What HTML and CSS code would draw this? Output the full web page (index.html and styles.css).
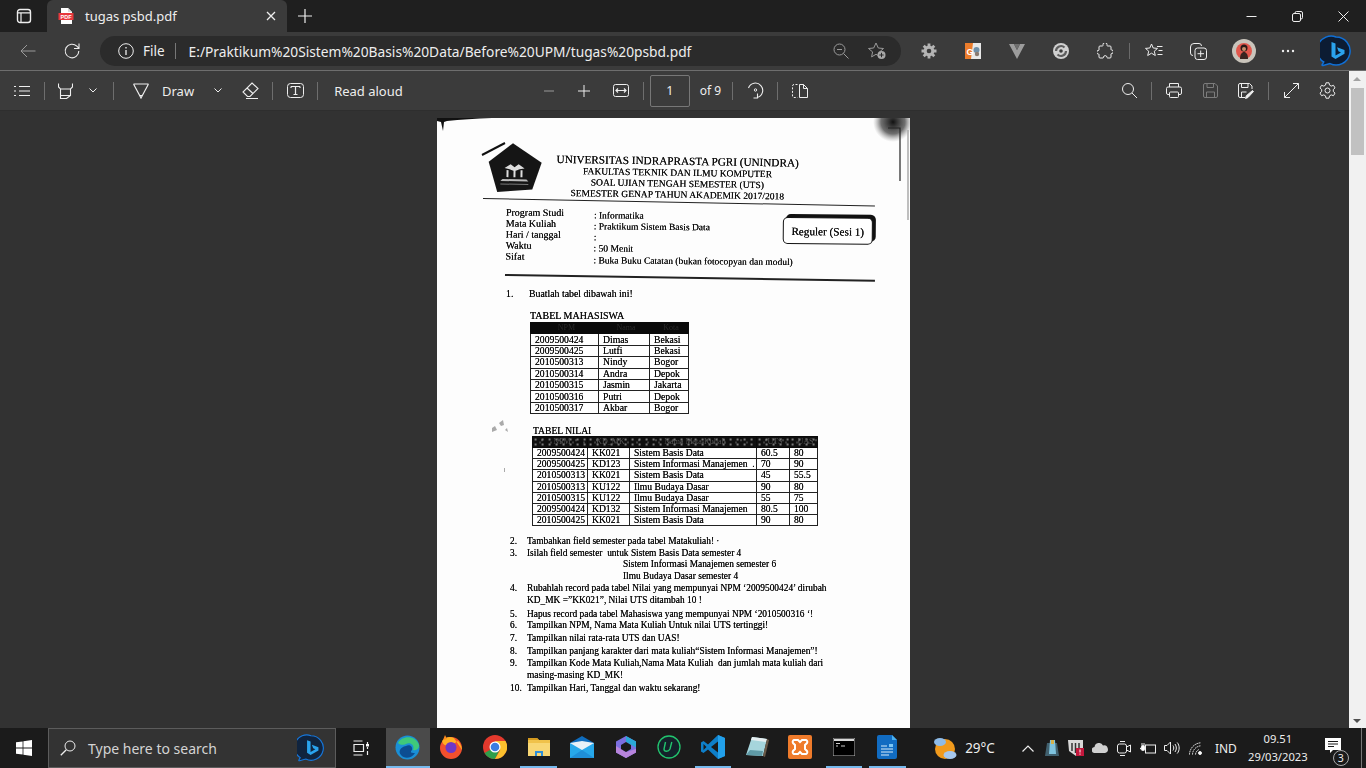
FILE: index.html
```html
<!DOCTYPE html>
<html lang="en">
<head>
    <meta charset="UTF-8">
    <title>tugas psbd.pdf</title>
    <link rel="stylesheet" href="styles.css">
</head>
<body>
    <!-- tab strip -->
    <header class="titlebar">
        <div class="tab-toggle">
            <svg class="ic" width="16" height="16" viewBox="0 0 16 16"><rect x="1.5" y="1.5" width="13" height="13" rx="2.5" stroke-width="1.4"/><path d="M1.5 4.8h13M5 4.8v9.7" stroke-width="1.2"/></svg>
        </div>
        <div class="tab">
            <svg class="tab-icon" width="16" height="16" viewBox="0 0 16 16"><path d="M3 0h7l4 4v12H3z" fill="#fff"/><path d="M10 0l4 4h-4z" fill="#d9d9d9"/><rect x="0.5" y="5" width="15" height="7" fill="#e8383d"/><text x="8" y="10.7" class="pdf-tag">PDF</text></svg>
            <span class="tab-title">tugas psbd.pdf</span>
            <svg class="ic tab-close" width="10" height="10" viewBox="0 0 10 10"><path d="M1 1l8 8M9 1l-8 8" stroke-width="1.3"/></svg>
        </div>
        <div class="new-tab">
            <svg class="ic" width="16" height="16" viewBox="0 0 16 16"><path d="M8 1v14M1 8h14" stroke-width="1.2"/></svg>
        </div>
        <div class="window-btns">
            <div class="win-btn"><svg class="ic" width="11" height="11" viewBox="0 0 11 11"><path d="M0.5 5.5h10"/></svg></div>
            <div class="win-btn"><svg class="ic" width="11" height="11" viewBox="0 0 11 11"><rect x="0.5" y="2.5" width="8" height="8" rx="1.5"/><path d="M3 2.5V2a1.5 1.5 0 0 1 1.5-1.5H9A1.5 1.5 0 0 1 10.5 2v4.5A1.5 1.5 0 0 1 9 8h-.5"/></svg></div>
            <div class="win-btn"><svg class="ic" width="11" height="11" viewBox="0 0 11 11"><path d="M0.5 0.5l10 10M10.5 0.5l-10 10"/></svg></div>
        </div>
    </header>

    <!-- address bar row -->
    <nav class="navbar">
        <div class="slot dim"><svg class="ic" width="16" height="14" viewBox="0 0 16 14"><path d="M15.5 7H1M7 1L1 7l6 6"/></svg></div>
        <div class="slot"><svg class="ic" width="18" height="18" viewBox="0 0 18 18"><path d="M15.8 9a6.8 6.8 0 1 1-2-4.8L16 6.4M16 1.5v5h-5" stroke-width="1.1"/></svg></div>
        <div class="address">
            <svg class="ic" width="16" height="16" viewBox="0 0 16 16"><circle cx="8" cy="8" r="7.3"/><path d="M8 7v5M8 4v1.4" stroke-width="1.3"/></svg>
            <span class="addr-file">File</span>
            <span class="addr-sep"></span>
            <span class="addr-url">E:/Praktikum%20Sistem%20Basis%20Data/Before%20UPM/tugas%20psbd.pdf</span>
            <span class="addr-end">
                <svg class="ic dim" width="16" height="16" viewBox="0 0 16 16"><circle cx="6.5" cy="6.5" r="5.5"/><path d="M4 6.5h5M10.5 10.5l5 5"/></svg>
                <svg class="addr-fav" width="20" height="18" viewBox="0 0 20 18"><path class="ic dim" d="M9 1l2.3 5 5.2.5-3.900 3.400 1 5-4.600-2.600-4.400 2.600 1-5L1.500 6.500 6.700 6z"/><circle cx="14.500" cy="13" r="4" fill="#a8a8a8"/><path d="M14.500 10.800v4.400M12.300 13h4.400" stroke="#2b2b2b"/></svg>
            </span>
        </div>
        <div class="slot first-ext"><svg width="16" height="16" viewBox="0 0 16 16"><path d="M8 .5v15M.5 8h15M2.700 2.700l10.600 10.600M13.300 2.700L2.700 13.300" stroke="#b4b4b4" stroke-width="2.800"/><circle cx="8" cy="8" r="5.400" fill="#b4b4b4"/><circle cx="8" cy="8" r="2.300" fill="#3b3b3b"/></svg></div>
        <div class="slot"><svg width="16" height="16" viewBox="0 0 16 16"><rect width="16" height="16" fill="#e8e8e8"/><path d="M0 0h8l-2 16H0z" fill="#ec7d2c"/><text x="1.500" y="12" class="ext-g">G</text><circle cx="11.500" cy="7" r="3" fill="#6f8fa8"/><circle cx="12" cy="11" r="2.200" fill="#8a7a70"/></svg></div>
        <div class="slot"><svg width="16" height="15" viewBox="0 0 16 15"><path d="M0 0h5l3 6 3-6h5L8 15z" fill="#9c9c9c"/><path d="M5 0l3 6 3-6z" fill="#6e6e6e"/></svg></div>
        <div class="slot"><svg width="16" height="16" viewBox="0 0 16 16"><circle cx="8" cy="8" r="8" fill="#d0d0d0"/><path d="M3 8a5 5 0 0 1 8.500-3.500M13 8a5 5 0 0 1-8.500 3.500" fill="none" stroke="#5e5e5e" stroke-width="2.200"/><circle cx="8" cy="8" r="1.800" fill="#3b3b3b"/></svg></div>
        <div class="slot"><svg class="ic" width="16" height="16" viewBox="0 0 16 16"><path d="M6 1.500a2 2 0 0 1 4 0c0 1 0 1.500 .5 1.500H13a1 1 0 0 1 1 1v2.500c0 .5.500.5 1 .5a1.800 1.800 0 0 1 0 3.500c-.5 0-1 0-1 .5V14a1 1 0 0 1-1 1h-2.500c-.5 0-.5-.5-.5-1a1.800 1.800 0 0 0-3.500 0c0 .5 0 1-.5 1H3a1 1 0 0 1-1-1v-2.500C2 11 1.500 11 1 11a1.800 1.800 0 0 1 0-3.500c.5 0 1 0 1-.5V4a1 1 0 0 1 1-1h2.500c.5 0 .5-.5.500-1.500z"/></svg></div>
        <span class="sep-nav"></span>
        <div class="slot"><svg class="ic" width="18" height="16" viewBox="0 0 18 16"><path d="M6.500 1l1.700 4 4.300.4-3.200 2.800 1 4.300-3.800-2.300-3.800 2.300 1-4.300L.5 5.400 4.800 5zM12 3.500h5.500M13.500 7.500h4M12.500 11.500h5"/></svg></div>
        <div class="slot"><svg class="ic" width="17" height="17" viewBox="0 0 17 17"><path d="M3 12.500A2.500 2.500 0 0 1 .5 10V4A3.500 3.500 0 0 1 4 .5h5A2.500 2.500 0 0 1 11.500 3"/><rect x="5" y="5" width="11.500" height="11.500" rx="2.500"/><path d="M10.700 7.500v6.500M7.500 10.700H14"/></svg></div>
        <div class="slot avatar-slot">
            <svg width="24" height="24" viewBox="0 0 24 24"><circle cx="12" cy="12" r="12" fill="#c9c4bb"/><circle cx="12" cy="12" r="8" fill="#e2574c"/><circle cx="12" cy="9" r="3.500" fill="#2a1a18"/><path d="M8 20c0-5 2-7 4-7s4 2 4 7z" fill="#3a2420"/><circle cx="12" cy="10" r="2" fill="#c98e6b"/></svg>
        </div>
        <div class="slot"><svg width="14" height="4" viewBox="0 0 14 4" fill="#eee"><circle cx="2" cy="2" r="1.200"/><circle cx="7" cy="2" r="1.200"/><circle cx="12" cy="2" r="1.200"/></svg></div>
        <div class="slot bing-slot">
            <svg width="32" height="32" viewBox="0 0 32 32"><path d="M16 2a14 14 0 1 1 -6 26.600L3 30.500c-1 .3-1.200-.6-.6-1.200l1.300-2.300A14 14 0 0 1 16 2z" fill="#0c1c33" stroke="#0f6fd6" stroke-width="1.500"/><path d="M11.500 7l4 1.500v12l5.500-3-2.500-1.200-1.500-4 7.500 2.700v3.800L15.500 24l-4-2.500z" fill="#2aa3ee"/></svg>
        </div>
    </nav>

    <div class="main">
        <div class="doc">
            <!-- pdf toolbar -->
            <div class="pdfbar">
                <div class="pslot w44"><svg class="ic" width="16" height="12" viewBox="0 0 16 12"><path d="M5 1.500h11M5 6h11M5 10.500h11M0 1.500h2M0 6h2M0 10.500h2" stroke-width="1.200"/></svg></div>
                <span class="divider"></span>
                <div class="pslot w40"><svg class="ic" width="15" height="16" viewBox="0 0 15 16"><path d="M.5 .5v3.500l2 2h10l2-2V.5M2.500 6v9.500l6 0 4-3V6M2.500 12.500h10" stroke-width="1.100"/></svg></div>
                <div class="pslot w16"><svg class="ic" width="8" height="5" viewBox="0 0 8 5"><path d="M.5.5L4 4 7.500.5"/></svg></div>
                <span class="divider ml-12"></span>
                <div class="pslot w36 ml-9"><svg class="ic" width="16" height="16" viewBox="0 0 16 16"><path d="M.5 1h15M.5 1L8 15l7.500-14M7 12.500h2" stroke-width="1.200"/></svg></div>
                <span class="bar-text ml-3">Draw</span>
                <div class="pslot w16 ml-16"><svg class="ic" width="8" height="5" viewBox="0 0 8 5"><path d="M.5.5L4 4 7.500.5"/></svg></div>
                <div class="pslot w36 ml-6"><svg class="ic" width="17" height="17" viewBox="0 0 17 17"><path d="M10 1l6 5.500-8 8H5.500L1 10zM5 6l6 5.500M4 16.500h12" stroke-width="1.100"/></svg></div>
                <span class="divider ml-4"></span>
                <div class="pslot w36 ml-4"><svg class="ic" width="17" height="15" viewBox="0 0 17 15"><rect x=".5" y=".5" width="16" height="14" rx="3"/><path d="M4 3.500h9M4 3.500v1.500M13 3.500v1.500M8.500 3.500v8M6.500 11.500h4" stroke-width="1.200"/></svg></div>
                <span class="divider ml-4"></span>
                <span class="bar-text ml-16">Read aloud</span>
                <div class="pslot w35 ml-129 dim"><svg class="ic" width="10" height="2" viewBox="0 0 10 2"><path d="M0 1h10"/></svg></div>
                <div class="pslot w35"><svg class="ic" width="12" height="12" viewBox="0 0 12 12"><path d="M6 0v12M0 6h12"/></svg></div>
                <div class="pslot w36 ml-1"><svg class="ic" width="16" height="13" viewBox="0 0 16 13"><rect x=".5" y=".5" width="15" height="12" rx="2"/><path d="M3 6.500h10M5 4.500l-2 2 2 2M11 4.500l2 2-2 2" stroke-width="1.200"/></svg></div>
                <span class="divider ml-4"></span>
                <div class="page-box">1</div>
                <span class="bar-text small ml-10">of 9</span>
                <span class="divider ml-11"></span>
                <div class="pslot w36 ml-4"><svg class="ic" width="17" height="17" viewBox="0 0 17 17"><path d="M1.500 6A7.300 7.300 0 1 1 10 15.500M10.500 11.500v4.500H6.500" stroke-width="1.100"/><circle cx="8.500" cy="8" r="1.200"/></svg></div>
                <span class="divider ml-4"></span>
                <div class="pslot w36 ml-4"><svg class="ic" width="16" height="14" viewBox="0 0 16 14"><path d="M5.500.5H2A1.500 1.500 0 0 0 .5 2v10A1.500 1.500 0 0 0 2 13.500h3.500" stroke-dasharray="2 1.500"/><path d="M7.500.5h4l4 4v9h-8zM11.500.5v4h4"/></svg></div>
                <div class="bar-spacer"></div>
                <div class="pslot w36"><svg class="ic" width="15" height="15" viewBox="0 0 15 15"><circle cx="6" cy="6" r="5.500"/><path d="M10 10l5 5"/></svg></div>
                <span class="divider ml-4"></span>
                <div class="pslot w36 ml-4"><svg class="ic" width="16" height="15" viewBox="0 0 16 15"><path d="M3.500 4V.5h9V4M3.500 11.500H2A1.500 1.500 0 0 1 .5 10V5.500A1.500 1.500 0 0 1 2 4h12a1.500 1.500 0 0 1 1.500 1.500V10a1.500 1.500 0 0 1-1.500 1.500h-1.500"/><rect x="3.500" y="9" width="9" height="5.500" rx="1"/></svg></div>
                <div class="pslot w36 faint"><svg class="ic" width="15" height="15" viewBox="0 0 15 15"><path d="M2 .5h10l2.500 2.500v10a1.500 1.500 0 0 1-1.500 1.500H2A1.500 1.500 0 0 1 .5 13V2A1.500 1.500 0 0 1 2 .5zM4 .5v4h6.500v-4M3.500 14.500V9h8v5.500"/></svg></div>
                <div class="pslot w36"><svg class="ic" width="16" height="16" viewBox="0 0 16 16"><path d="M7 14.500H2A1.500 1.500 0 0 1 .5 13V2A1.500 1.500 0 0 1 2 .5h9.500L14 3v3M3.500.5v4h6.500v-4M3.500 14.500V9h5"/><path d="M14.500 7.500l1 1-5.500 6-2.500 1 .8-2.700z" fill="#eee"/></svg></div>
                <span class="divider ml-4"></span>
                <div class="pslot w36 ml-4"><svg class="ic" width="15" height="15" viewBox="0 0 15 15"><path d="M.5 14.500l14-14M9 .5h5.500V6M6 14.500H.5V9"/></svg></div>
                <div class="pslot w36"><svg class="ic" width="17" height="17" viewBox="0 0 17 17"><path d="M7 .8h3l.5 2.300 1.700 1 2.300-.8 1.500 2.600-1.700 1.600v2l1.700 1.600-1.500 2.600-2.300-.8-1.700 1-.5 2.300H7l-.5-2.300-1.700-1-2.300.8L1 11.100l1.700-1.600v-2L1 5.900l1.500-2.600 2.300.8 1.700-1z"/><circle cx="8.500" cy="8.500" r="2.500"/></svg></div>
            </div>

            <!-- scanned page -->
            <main class="viewer">
                <div class="paper">
                    <svg class="scan-marks" width="473" height="610" viewBox="0 0 473 610">
                        <defs><radialGradient id="smudge"><stop offset="0" stop-color="#111"/><stop offset=".6" stop-color="#333" stop-opacity=".7"/><stop offset="1" stop-color="#888" stop-opacity="0"/></radialGradient></defs>
                        <path d="M0 0h55q-25 1-45 3L7 4 6 13 4 4 0 3z" fill="#111"/>
                        <ellipse cx="456" cy="4" rx="20" ry="20" fill="url(#smudge)"/>
                        <path d="M451 10h12v53" fill="none" stroke="#222" stroke-width="1.200"/>
                        <path d="M471 12v90" stroke="#aaa" stroke-width="1.500"/>
                        <path d="M45 37l23-12" stroke="#111" stroke-width="2"/>
                        <path d="M55 310l3-2 2 4-5 2zM62 305l4-3 1 5-3 1zM68 312l2-2 1 4zM67 350l1 0 0 4-1 0z" fill="#aaa"/>
                    </svg>

                    <div class="sheet">
                        <section class="letterhead">
                            <svg class="logo" width="56" height="56" viewBox="0 0 56 56"><path d="M25 1l29 19-9 27-35 3-9-30z" fill="#151515"/><path d="M17 26l6-4 4 3 4-3 6 4-5 1-5 2-5-2zM19 28h2v7h-2zM26 28h2v7h-2zM33 28h2v7h-2z" fill="#ddd"/><path d="M15 37h24l2 2H13z" fill="#bbb"/><path d="M13 42h28" stroke="#777"/></svg>
                            <div class="uni-lines">
                                <div class="uni-name">UNIVERSITAS INDRAPRASTA PGRI (UNINDRA)</div>
                                <div class="uni-sub">FAKULTAS TEKNIK DAN ILMU KOMPUTER</div>
                                <div class="uni-sub">SOAL UJIAN TENGAH SEMESTER (UTS)</div>
                                <div class="uni-sub">SEMESTER GENAP TAHUN AKADEMIK 2017/2018</div>
                            </div>
                        </section>
                        <hr class="rule rule-top">

                        <section class="exam-info">
                            <div class="info-labels">
                                <div>Program Studi</div>
                                <div>Mata Kuliah</div>
                                <div>Hari / tanggal</div>
                                <div>Waktu</div>
                                <div>Sifat</div>
                            </div>
                            <div class="info-values">
                                <div>: Informatika</div>
                                <div>: Praktikum Sistem Basis Data</div>
                                <div>:</div>
                                <div>: 50 Menit</div>
                                <div>: Buka Buku Catatan (bukan fotocopyan dan modul)</div>
                            </div>
                            <div class="session-badge">Reguler (Sesi 1)</div>
                        </section>
                        <hr class="rule rule-mid">

                        <div class="q-row first-q"><span class="q-num">1.</span><span class="q-one">Buatlah tabel dibawah ini!</span></div>

                        <div class="table-title tt-mhs">TABEL MAHASISWA</div>
                        <table class="scan-table tbl-mhs">
                            <colgroup><col class="c-68"><col class="c-51"><col class="c-39"></colgroup>
                            <tr class="head"><th>NPM</th><th>Nama</th><th>Kota</th></tr>
                            <tr><td>2009500424</td><td>Dimas</td><td>Bekasi</td></tr>
                            <tr><td>2009500425</td><td>Lutfi</td><td>Bekasi</td></tr>
                            <tr><td>2010500313</td><td>Nindy</td><td>Bogor</td></tr>
                            <tr><td>2010500314</td><td>Andra</td><td>Depok</td></tr>
                            <tr><td>2010500315</td><td>Jasmin</td><td>Jakarta</td></tr>
                            <tr><td>2010500316</td><td>Putri</td><td>Depok</td></tr>
                            <tr><td>2010500317</td><td>Akbar</td><td>Bogor</td></tr>
                        </table>

                        <div class="table-title tt-nilai">TABEL NILAI</div>
                        <table class="scan-table tbl-nilai">
                            <colgroup><col class="c-55"><col class="c-42"><col class="c-127"><col class="c-33"><col class="c-28"></colgroup>
                            <tr class="head noisy"><th>NPM</th><th>KD_MK</th><th>Nama Mata Kuliah</th><th>UTS</th><th>UAS</th></tr>
                            <tr><td>2009500424</td><td>KK021</td><td>Sistem Basis Data</td><td>60.5</td><td>80</td></tr>
                            <tr><td>2009500425</td><td>KD123</td><td>Sistem Informasi Manajemen&nbsp; .</td><td>70</td><td>90</td></tr>
                            <tr><td>2010500313</td><td>KK021</td><td>Sistem Basis Data</td><td>45</td><td>55.5</td></tr>
                            <tr><td>2010500313</td><td>KU122</td><td>Ilmu Budaya Dasar</td><td>90</td><td>80</td></tr>
                            <tr><td>2010500315</td><td>KU122</td><td>Ilmu Budaya Dasar</td><td>55</td><td>75</td></tr>
                            <tr><td>2009500424</td><td>KD132</td><td>Sistem Informasi Manajemen</td><td>80.5</td><td>100</td></tr>
                            <tr><td>2010500425</td><td>KK021</td><td>Sistem Basis Data</td><td>90</td><td>80</td></tr>
                        </table>

                        <ol class="questions">
                            <li><span class="q-num">2.</span>Tambahkan field semester pada tabel Matakuliah! ·</li>
                            <li><span class="q-num">3.</span>Isilah field semester&nbsp; untuk Sistem Basis Data semester 4</li>
                            <li class="q-sub">Sistem Informasi Manajemen semester 6</li>
                            <li class="q-sub">Ilmu Budaya Dasar semester 4</li>
                            <li><span class="q-num">4.</span>Rubahlah record pada tabel Nilai yang mempunyai NPM ‘2009500424’ dirubah</li>
                            <li class="q-cont">KD_MK =”KK021”, Nilai UTS ditambah 10 !</li>
                            <li><span class="q-num">5.</span>Hapus record pada tabel Mahasiswa yang mempunyai NPM ‘2010500316 ‘!</li>
                            <li><span class="q-num">6.</span>Tampilkan NPM, Nama Mata Kuliah Untuk nilai UTS tertinggi!</li>
                            <li><span class="q-num">7.</span>Tampilkan nilai rata-rata UTS dan UAS!</li>
                            <li><span class="q-num">8.</span>Tampilkan panjang karakter dari mata kuliah“Sistem Informasi Manajemen”!</li>
                            <li><span class="q-num">9.</span>Tampilkan Kode Mata Kuliah,Nama Mata Kuliah&nbsp; dan jumlah mata kuliah dari</li>
                            <li class="q-cont">masing-masing KD_MK!</li>
                            <li><span class="q-num">10.</span>Tampilkan Hari, Tanggal dan waktu sekarang!</li>
                        </ol>
                    </div>
                </div>
            </main>
        </div>

        <aside class="scroll-track">
            <div class="arrow-up"></div>
            <div class="scroll-thumb"></div>
            <div class="arrow-down"></div>
        </aside>
    </div>

    <!-- windows taskbar -->
    <footer class="taskbar">
        <div class="start"><svg width="16" height="16" viewBox="0 0 16 16" fill="#fff"><path d="M0 2.300l6.600-.9v6.200H0zM7.400 1.300L16 0v7.600H7.400zM0 8.400h6.600v6.200L0 13.700zM7.400 8.400H16V16l-8.600-1.200z"/></svg></div>
        <div class="searchbox">
            <svg class="ic search-ic" width="16" height="16" viewBox="0 0 16 16"><circle cx="10" cy="6" r="5"/><path d="M6.300 9.700L.8 15.200" stroke-width="1.300"/></svg>
            <span class="search-text">Type here to search</span>
            <svg class="search-bing" width="28" height="28" viewBox="0 0 32 32"><path d="M16 2a14 14 0 1 1-6 26.600L3 30.500c-1 .3-1.200-.6-.6-1.200l1.300-2.300A14 14 0 0 1 16 2z" fill="#10243f" stroke="#1577dd" stroke-width="1.300"/><path d="M11.500 7l4 1.500v12l5.500-3-2.500-1.200-1.500-4 7.500 2.700v3.800L15.500 24l-4-2.500z" fill="#2aa3ee"/></svg>
        </div>
        <div class="taskview"><svg class="ic" width="16" height="16" viewBox="0 0 16 16"><path d="M.5 1h9M.5 15h9M11 4h0M1 4.500h9.500v7H1zM14.500 2v3M14.500 7v2M14.500 11v4" stroke-width="1.200"/><rect x="13" y="4" width="3" height="2.500" fill="#fff" stroke="none"/></svg></div>

        <div class="task-apps">
            <div class="app active edge"><svg width="25" height="25" viewBox="0 0 25 25"><circle cx="12.500" cy="12.500" r="12" fill="#1a8fd6"/><path d="M3 8C6 1 20 -1 24 10c.6 4-3 6-6 5 2-5-3-8-7-6-3 1.500-6 1-8-1z" fill="#3fc97a"/><path d="M11 11c3-2 7 0 6 4-3 3 1 3 3 3-4 6-11 6-14 2-3-3-1-8 5-9z" fill="#0c4d92"/></svg></div>
            <div class="app"><svg width="24" height="24" viewBox="0 0 24 24"><circle cx="12" cy="13" r="11" fill="#f2502d"/><path d="M3 6c2 8 10 4 16 0 3 3 4 7 4 9L15 3c-4-2-9-1-12 3z" fill="#ffb021"/><circle cx="12" cy="12.500" r="5.500" fill="#6d38c7"/><path d="M4 5l2-5 2 4z" fill="#ff8a1e"/></svg></div>
            <div class="app"><svg width="24" height="24" viewBox="0 0 24 24"><circle cx="12" cy="12" r="12" fill="#e4392d"/><path d="M12 12L1.600 18A12 12 0 0 0 12 24l6-12z" fill="#2f9e4a"/><path d="M12 6h10.500A12 12 0 0 1 12 24l5.200-9z" fill="#fbc02d"/><circle cx="12" cy="12" r="5.500" fill="#fff"/><circle cx="12" cy="12" r="4.300" fill="#3b7de0"/></svg></div>
            <div class="app active"><svg width="22" height="20" viewBox="0 0 22 20"><path d="M0 1h9l2 2h11v15H0z" fill="#f0c24a"/><path d="M0 1h9l2 2H0z" fill="#d49a1f"/><path d="M0 6h22v13H0z" fill="#f8d774"/><path d="M7 14h8v5h-2v-3H9v3H7z" fill="#2f8fd8"/></svg></div>
            <div class="app"><svg width="24" height="22" viewBox="0 0 24 22"><path d="M12 0l12 7v15H0V7z" fill="#0f6cbd"/><path d="M0 7h24v15H0z" fill="#27a8ea"/><path d="M0 7l12 7 12-7-12-2z" fill="#e8f1f8"/><path d="M0 22l12-8 12 8z" fill="#1f8fd8"/></svg></div>
            <div class="app"><svg width="20" height="22" viewBox="0 0 20 22"><path d="M10 0l10 5.500v11L10 22 0 16.500v-11z" fill="#7b6fe0"/><path d="M10 0l10 5.500v6L10 6z" fill="#2aa8d8"/><path d="M0 10l10 6 10-3v3.500L10 22 0 16.500z" fill="#b784dc"/><path d="M10 6l5 3v4l-5 3-5-3V9z" fill="#1a1a1a"/></svg></div>
            <div class="app"><svg width="24" height="24" viewBox="0 0 24 24"><circle cx="12" cy="12" r="11" fill="#14222a" stroke="#22c56e" stroke-width="1.300"/><path d="M8.500 7l-1.500 7c0 3 4.500 3 6 0l1.800-7" fill="none" stroke="#22c56e" stroke-width="1.400"/></svg></div>
            <div class="app active"><svg width="24" height="24" viewBox="0 0 24 24"><path d="M17 0l7 3v18l-7 3L7 14.500 2.500 18 0 16.500V7.500L2.500 6 7 9.500z" fill="#0e7fc9"/><path d="M17 0l7 3v18l-7 3z" fill="#22a0ea"/><path d="M17 6.500L10 12l7 5.500z" fill="#1a1a1a"/><path d="M2.500 9v6l3-3z" fill="#1a1a1a"/></svg></div>
            <div class="app"><svg width="24" height="22" viewBox="0 0 24 22"><path d="M7 1l15 2-4 17L1 19z" fill="#a6d5dc"/><path d="M7 1l15 2-1 3L6 4z" fill="#e5eef0"/><path d="M22 3l2 1-4 17-2-1z" fill="#6b5a48"/><path d="M5 14l13 1-1 5-16-1z" fill="#5f9aa6"/></svg></div>
            <div class="app"><svg width="24" height="24" viewBox="0 0 24 24"><rect width="24" height="24" rx="2" fill="#ef7b2b"/><path d="M6 5h4l2 2 2-2h4a2 2 0 0 1 1 3l-2 2v4l2 2a2 2 0 0 1-1 3h-4l-2-2-2 2H6a2 2 0 0 1-1-3l2-2v-4L5 8a2 2 0 0 1 1-3z" fill="none" stroke="#fff" stroke-width="2"/></svg></div>
            <div class="app active"><svg width="22" height="18" viewBox="0 0 22 18"><rect width="22" height="18" fill="#000" stroke="#bbb"/><rect x="1" y="1" width="20" height="2" fill="#d8d8d8"/><path d="M3 5.500h4M3 8h2M8 8h4" stroke="#ccc"/></svg></div>
            <div class="app active"><svg width="20" height="24" viewBox="0 0 20 24"><path d="M2 0h13l5 5v17a2 2 0 0 1-2 2H2a2 2 0 0 1-2-2V2a2 2 0 0 1 2-2z" fill="#116cc2"/><path d="M15 0l5 5h-5z" fill="#4ab0ee"/><path d="M4 11h6M4 14h12M4 17h12M4 20h8" stroke="#d8ecfa"/><path d="M12 9h4v3h-4z" fill="#7cc6f4"/></svg></div>
        </div>

        <div class="tray">
            <svg class="weather" width="24" height="24" viewBox="0 0 24 24"><circle cx="12" cy="13" r="10" fill="#f19a1c"/><ellipse cx="7" cy="6" rx="6" ry="4" fill="#8ebbe8"/><ellipse cx="17" cy="19" rx="6.500" ry="4" fill="#a6c8ee"/></svg>
            <span class="temp">29°C</span>
            <div class="tray-icons">
                <div class="tray-ic"><svg class="ic" width="12" height="7" viewBox="0 0 12 7"><path d="M.5 6.500L6 1l5.500 5.500" stroke-width="1.200"/></svg></div>
                <div class="tray-ic"><svg width="14" height="18" viewBox="0 0 14 18"><path d="M2 4h10l2 13H0z" fill="#41606e"/><path d="M5 1h5l1 14H4z" fill="#7fc3de"/><path d="M6 1h3v4H6z" fill="#d4b14c"/></svg></div>
                <div class="tray-ic"><svg width="16" height="16" viewBox="0 0 16 16"><path d="M0 0h15v9l-7 7-7-5z" fill="#d8d8d8"/><path d="M4 3v8M7.500 3v10M11 3v8" stroke="#333" stroke-width="1.500"/><rect x="8" y="8" width="8" height="8" fill="#c4173c"/><path d="M12 9.500v3M12 13.500v1.200" stroke="#fff"/></svg></div>
                <div class="tray-ic"><svg width="16" height="10" viewBox="0 0 16 10" fill="#d0d0d0"><path d="M3 10a3 3 0 0 1-.5-6A4.500 4.500 0 0 1 11 2.500 3.800 3.800 0 0 1 13 10z"/></svg></div>
                <div class="tray-ic"><svg class="ic" width="14" height="17" viewBox="0 0 14 17"><rect x=".5" y="4" width="9" height="9" rx="2"/><path d="M9.500 7l4-2v7l-4-2M3 1.500h5M3 15.500h5"/></svg></div>
                <div class="tray-ic"><svg class="ic" width="16" height="11" viewBox="0 0 16 11"><rect x="5.500" y="2" width="10" height="8"/><path d="M0 5.500h6" stroke-width="1.500"/><rect x="1.500" y="2.500" width="3" height="5" rx="1" fill="#fff"/><path d="M2 0v2.500M4 0v2.500"/></svg></div>
                <div class="tray-ic"><svg class="ic" width="16" height="14" viewBox="0 0 16 14"><path d="M.5 4.500h2.500l3.500-3.500v12L3 9.500H.5zM9 4.500c1 1.500 1 3.500 0 5M11 3c1.800 2.500 1.800 5.500 0 8M13.200 1.500c2.600 3 2.600 8 0 11"/></svg></div>
                <div class="tray-ic"><svg class="ic" width="13" height="13" viewBox="0 0 13 13"><path d="M.5 12.500A12 12 0 0 1 12 .8M.5 12.500M3.500 12.500A9 9 0 0 1 12 3.800M6.500 12.500A6 6 0 0 1 10 7.500" stroke-dasharray="1.600 .6"/><circle cx="11" cy="11" r="1.500" fill="#fff"/></svg></div>
            </div>
            <span class="lang">IND</span>
            <div class="clock"><div>09.51</div><div>29/03/2023</div></div>
            <div class="notif">
                <svg width="16" height="15" viewBox="0 0 16 15" fill="#fff"><path d="M0 0h16v12H8l-3 3v-3H0z"/><path d="M3 3.500h10M3 6h10M3 8.500h6" stroke="#1a1a1a"/></svg>
                <span class="notif-count">3</span>
            </div>
            <div class="show-desktop"></div>
        </div>
    </footer>
</body>
</html>
```

FILE: styles.css
```css
* {
    box-sizing: border-box;
}

html, body {
    height: 100%;
}

body {
    margin: 0;
    width: 1366px;
    height: 768px;
    overflow: hidden;
    display: flex;
    flex-direction: column;
    background: #333;
    color: #eee;
    font-family: "Noto Sans", "Open Sans", sans-serif;
}

.ic {
    fill: none;
    stroke: currentColor;
    stroke-width: 1;
}

.dim {
    color: #9a9a9a;
}

.faint {
    color: #7c7c7c;
}

/* tab strip */
.titlebar {
    height: 32px;
    flex: none;
    display: flex;
    background: #1f1f1f;
}

.tab-toggle {
    width: 47px;
    display: flex;
    align-items: center;
    justify-content: center;
}

.tab {
    width: 240px;
    display: flex;
    align-items: center;
    background: #3b3b3b;
    border-radius: 6px 6px 0 0;
    padding: 0 8px 0 11px;
}

.pdf-tag {
    font: bold 5.5px "Liberation Sans", sans-serif;
    fill: #fff;
    text-anchor: middle;
}

.tab-title {
    font-size: 13px;
    margin-left: 11px;
    flex: 1;
}

.tab-close {
    margin-right: 3px;
}

.new-tab {
    width: 36px;
    display: flex;
    align-items: center;
    justify-content: center;
}

.window-btns {
    margin-left: auto;
    display: flex;
}

.win-btn {
    width: 46px;
    display: flex;
    align-items: center;
    justify-content: center;
}

/* address row */
.navbar {
    height: 39px;
    flex: none;
    display: flex;
    align-items: center;
    padding-left: 6px;
    background: #3b3b3b;
    border-bottom: 1px solid #6e6e6e;
}

.slot {
    width: 44px;
    height: 32px;
    flex: none;
    display: flex;
    align-items: center;
    justify-content: center;
}

.address {
    width: 801px;
    height: 30px;
    margin-left: 6px;
    flex: none;
    display: flex;
    align-items: center;
    padding: 0 14px 0 18px;
    background: #2b2b2b;
    border-radius: 15px;
}

.addr-file {
    font-size: 13.5px;
    margin-left: 9px;
}

.addr-sep {
    width: 1px;
    height: 16px;
    margin: 0 13px 0 10px;
    background: #777;
}

.addr-url {
    font-size: 13.75px;
    white-space: nowrap;
}

.addr-end {
    margin-left: auto;
    display: flex;
    align-items: center;
    gap: 18px;
}

.addr-fav {
    display: block;
}

.first-ext {
    margin-left: 6px;
}

.ext-g {
    font: bold 9px "Liberation Sans", sans-serif;
    fill: #fff;
}

.sep-nav {
    width: 1px;
    height: 16px;
    margin: 0 2px;
    background: #6a6a6a;
}

.avatar-slot {
    margin-left: 2px;
}

.bing-slot {
    margin-left: 4px;
}

/* below the address row */
.main {
    flex: 1;
    min-height: 0;
    display: flex;
}

.doc {
    flex: 1;
    min-width: 0;
    display: flex;
    flex-direction: column;
}

.pdfbar {
    height: 40px;
    flex: none;
    display: flex;
    align-items: center;
    background: #3b3b3b;
    border-bottom: 1px solid #2e2e2e;
    padding-right: 4px;
}

.pslot {
    height: 32px;
    flex: none;
    display: flex;
    align-items: center;
    justify-content: center;
}

.w44 { width: 44px; }
.w40 { width: 40px; }
.w36 { width: 36px; }
.w35 { width: 35px; }
.w16 { width: 16px; }

.ml-1 { margin-left: 1px; }
.ml-3 { margin-left: 3px; }
.ml-4 { margin-left: 4px; }
.ml-6 { margin-left: 6px; }
.ml-9 { margin-left: 9px; }
.ml-10 { margin-left: 10px; }
.ml-11 { margin-left: 11px; }
.ml-12 { margin-left: 12px; }
.ml-16 { margin-left: 16px; }
.ml-129 { margin-left: 129px; }

.divider {
    width: 1px;
    height: 18px;
    flex: none;
    background: #6e6e6e;
}

.bar-text {
    font-size: 13px;
    white-space: nowrap;
}

.bar-text.small {
    font-size: 12px;
}

.page-box {
    width: 40px;
    height: 32px;
    margin-left: 6px;
    flex: none;
    display: flex;
    align-items: center;
    justify-content: center;
    font-size: 12.5px;
    border: 1px solid #777;
    border-radius: 2px;
}

.bar-spacer {
    flex: 1;
}

.viewer {
    flex: 1;
    min-height: 0;
    overflow: hidden;
    padding: 7px 0 0 437px;
    background: #323232;
}

.scroll-track {
    width: 17px;
    flex: none;
    position: relative;
    padding: 17px 2px 0;
    background: #f1f1f1;
}

.scroll-thumb {
    height: 67px;
    background: #c1c1c1;
}

.arrow-up, .arrow-down {
    position: absolute;
    left: 4px;
    border-left: 4px solid transparent;
    border-right: 4px solid transparent;
}

.arrow-up {
    top: 6px;
    border-bottom: 4px solid #a3a3a3;
}

.arrow-down {
    bottom: 5px;
    border-top: 4px solid #505050;
}

/* scanned paper */
.paper {
    width: 473px;
    height: 640px;
    position: relative;
    background: #fdfdfd;
    overflow: hidden;
}

.scan-marks {
    position: absolute;
    top: 0;
    left: 0;
}

.sheet {
    height: 100%;
    padding-top: 23px;
    color: #111;
    font-family: "Liberation Serif", serif;
    text-shadow: 0 0 .4px #000;
    filter: blur(.3px);
}

.letterhead {
    display: flex;
    padding-left: 51px;
    transform: rotate(.9deg);
    transform-origin: 0 0;
}

.logo {
    flex: none;
}

.uni-lines {
    width: 250px;
    margin-left: 9px;
    padding-top: 10px;
    text-align: center;
}

.uni-name {
    font-size: 11.2px;
    line-height: 13px;
    white-space: nowrap;
}

.uni-sub {
    font-size: 9.5px;
    line-height: 11px;
    white-space: nowrap;
}

.rule {
    border: 0;
    background: #222;
    margin: 0;
}

.rule-top {
    width: 392px;
    height: 1px;
    margin: 1px 0 0 46px;
    transform: rotate(1.1deg);
    transform-origin: 0 0;
}

.exam-info {
    position: relative;
    display: flex;
    padding-left: 69px;
    margin-top: 7px;
    font-size: 10px;
    transform: rotate(.5deg);
    transform-origin: 0 0;
}

.info-labels {
    width: 88px;
    line-height: 11px;
}

.info-values {
    line-height: 11px;
    padding-top: 3px;
    white-space: nowrap;
    font-size: 9.5px;
}

.info-values div:nth-child(5) {
    margin-top: 1px;
}

.session-badge {
    position: absolute;
    top: 8px;
    left: 346px;
    width: 90px;
    height: 27px;
    display: flex;
    align-items: center;
    justify-content: center;
    font-size: 11.2px;
    background: #fff;
    border: 1px solid #111;
    border-radius: 5px;
    box-shadow: 3px -3px 0 #111;
    white-space: nowrap;
}

.rule-mid {
    width: 370px;
    height: 2px;
    margin: 9px 0 0 68px;
    transform: rotate(.9deg);
    transform-origin: 0 0;
}

.q-row {
    font-size: 9.8px;
    line-height: 12px;
}

.first-q {
    display: flex;
    margin: 12px 0 0 69px;
}

.q-one {
    margin-left: 16px;
}

.first-q .q-num {
    width: 7px;
}

.table-title {
    line-height: 12px;
    white-space: nowrap;
}

.tt-mhs {
    margin: 10px 0 0 93px;
    font-size: 10px;
}

.tt-nilai {
    margin: 11px 0 -1px 96px;
    font-size: 9.6px;
}

.scan-table {
    border-collapse: collapse;
    table-layout: fixed;
    font-size: 9.7px;
    background: #fff;
}

.tbl-mhs {
    width: 158px;
    margin-left: 93px;
}

.tbl-nilai {
    width: 286px;
    margin-left: 95px;
    font-size: 9.6px;
}

.c-68 { width: 68px; }
.c-51 { width: 51px; }
.c-39 { width: 39px; }
.c-55 { width: 55px; }
.c-42 { width: 42px; }
.c-127 { width: 127px; }
.c-33 { width: 33px; }
.c-28 { width: 28px; }

.scan-table td, .scan-table th {
    height: 11.4px;
    padding: 0 0 0 4px;
    line-height: 10px;
    border: 1px solid #222;
    white-space: nowrap;
    overflow: hidden;
}

.tbl-nilai td, .tbl-nilai th {
    height: 11.1px;
}

.scan-table .head th {
    background: #0a0a0a;
    color: #2a2a2a;
    text-shadow: none;
    font-weight: normal;
    text-align: center;
    font-size: 8px;
    border-color: #0a0a0a;
}

/* speckled toner on the second table's header */
.scan-table .noisy th {
    background:
        radial-gradient(circle at 30% 40%, #8a8a8a 0 .7px, transparent 1px) 0 0 / 7px 5px,
        radial-gradient(circle at 60% 70%, #666 0 .7px, transparent 1px) 0 0 / 11px 7px,
        radial-gradient(circle at 50% 30%, #aaa 0 .6px, transparent .9px) 0 0 / 17px 9px,
        #101010;
    color: #555;
}

.questions {
    list-style: none;
    margin: 10px 0 0;
    padding: 0;
    font-size: 9.4px;
    line-height: 11.8px;
}

.questions li {
    display: flex;
    padding-left: 73px;
    white-space: pre;
}

/* the scan's line spacing is not even */
.questions li:nth-child(7) {
    margin-top: 2px;
}

.questions li:nth-child(9), .questions li:nth-child(10) {
    margin-top: 1px;
}

.questions li:nth-child(13) {
    margin-top: 2px;
}

.questions .q-num {
    width: 17px;
    flex: none;
}

.questions .q-sub {
    padding-left: 186px;
}

.questions .q-cont {
    padding-left: 90px;
}

/* taskbar */
.taskbar {
    height: 40px;
    flex: none;
    display: flex;
    align-items: center;
    background: #1b1b1b;
}

.start {
    width: 48px;
    height: 40px;
    flex: none;
    display: flex;
    align-items: center;
    justify-content: center;
}

.searchbox {
    width: 288px;
    height: 40px;
    flex: none;
    display: flex;
    align-items: center;
    padding: 0 10px 0 11px;
    background: #333;
    border: 1px solid #5c5c5c;
}

.search-text {
    margin-left: 12px;
    font-size: 14px;
    color: #d4d4d4;
}

.search-bing {
    margin-left: auto;
}

.taskview {
    width: 50px;
    flex: none;
    display: flex;
    justify-content: center;
}

.task-apps {
    display: flex;
}

.app {
    width: 43.6px;
    height: 40px;
    flex: none;
    display: flex;
    align-items: center;
    justify-content: center;
    border-bottom: 2px solid transparent;
}

.app.active {
    border-image: linear-gradient(90deg, transparent 10%, #76b9ed 10% 90%, transparent 90%) 1;
}

.app.edge {
    background: #4a4a4a;
    border-image: none;
    border-bottom-color: #76b9ed;
}

.tray {
    flex: 1;
    display: flex;
    align-items: center;
    height: 40px;
    padding-left: 24px;
    font-size: 12px;
}

.weather {
    flex: none;
}

.temp {
    margin-left: 8px;
    font-size: 13.5px;
}

.tray-icons {
    display: flex;
    margin-left: 21px;
}

.tray-ic {
    width: 24px;
    height: 40px;
    display: flex;
    align-items: center;
    justify-content: center;
}

.lang {
    margin-left: 7px;
}

.clock {
    width: 80px;
    margin-left: 1px;
    text-align: center;
    line-height: 18px;
    font-size: 11.2px;
}

.notif {
    width: 30px;
    height: 40px;
    position: relative;
    display: flex;
    align-items: center;
    justify-content: center;
    padding-bottom: 6px;
}

.notif-count {
    position: absolute;
    top: 22px;
    left: 15px;
    width: 16px;
    height: 16px;
    line-height: 14px;
    text-align: center;
    font-size: 10.5px;
    background: #1b1b1b;
    border: 1px solid #aaa;
    border-radius: 50%;
}

.show-desktop {
    width: 1px;
    height: 40px;
    margin-left: 13px;
    background: #777;
}
```
